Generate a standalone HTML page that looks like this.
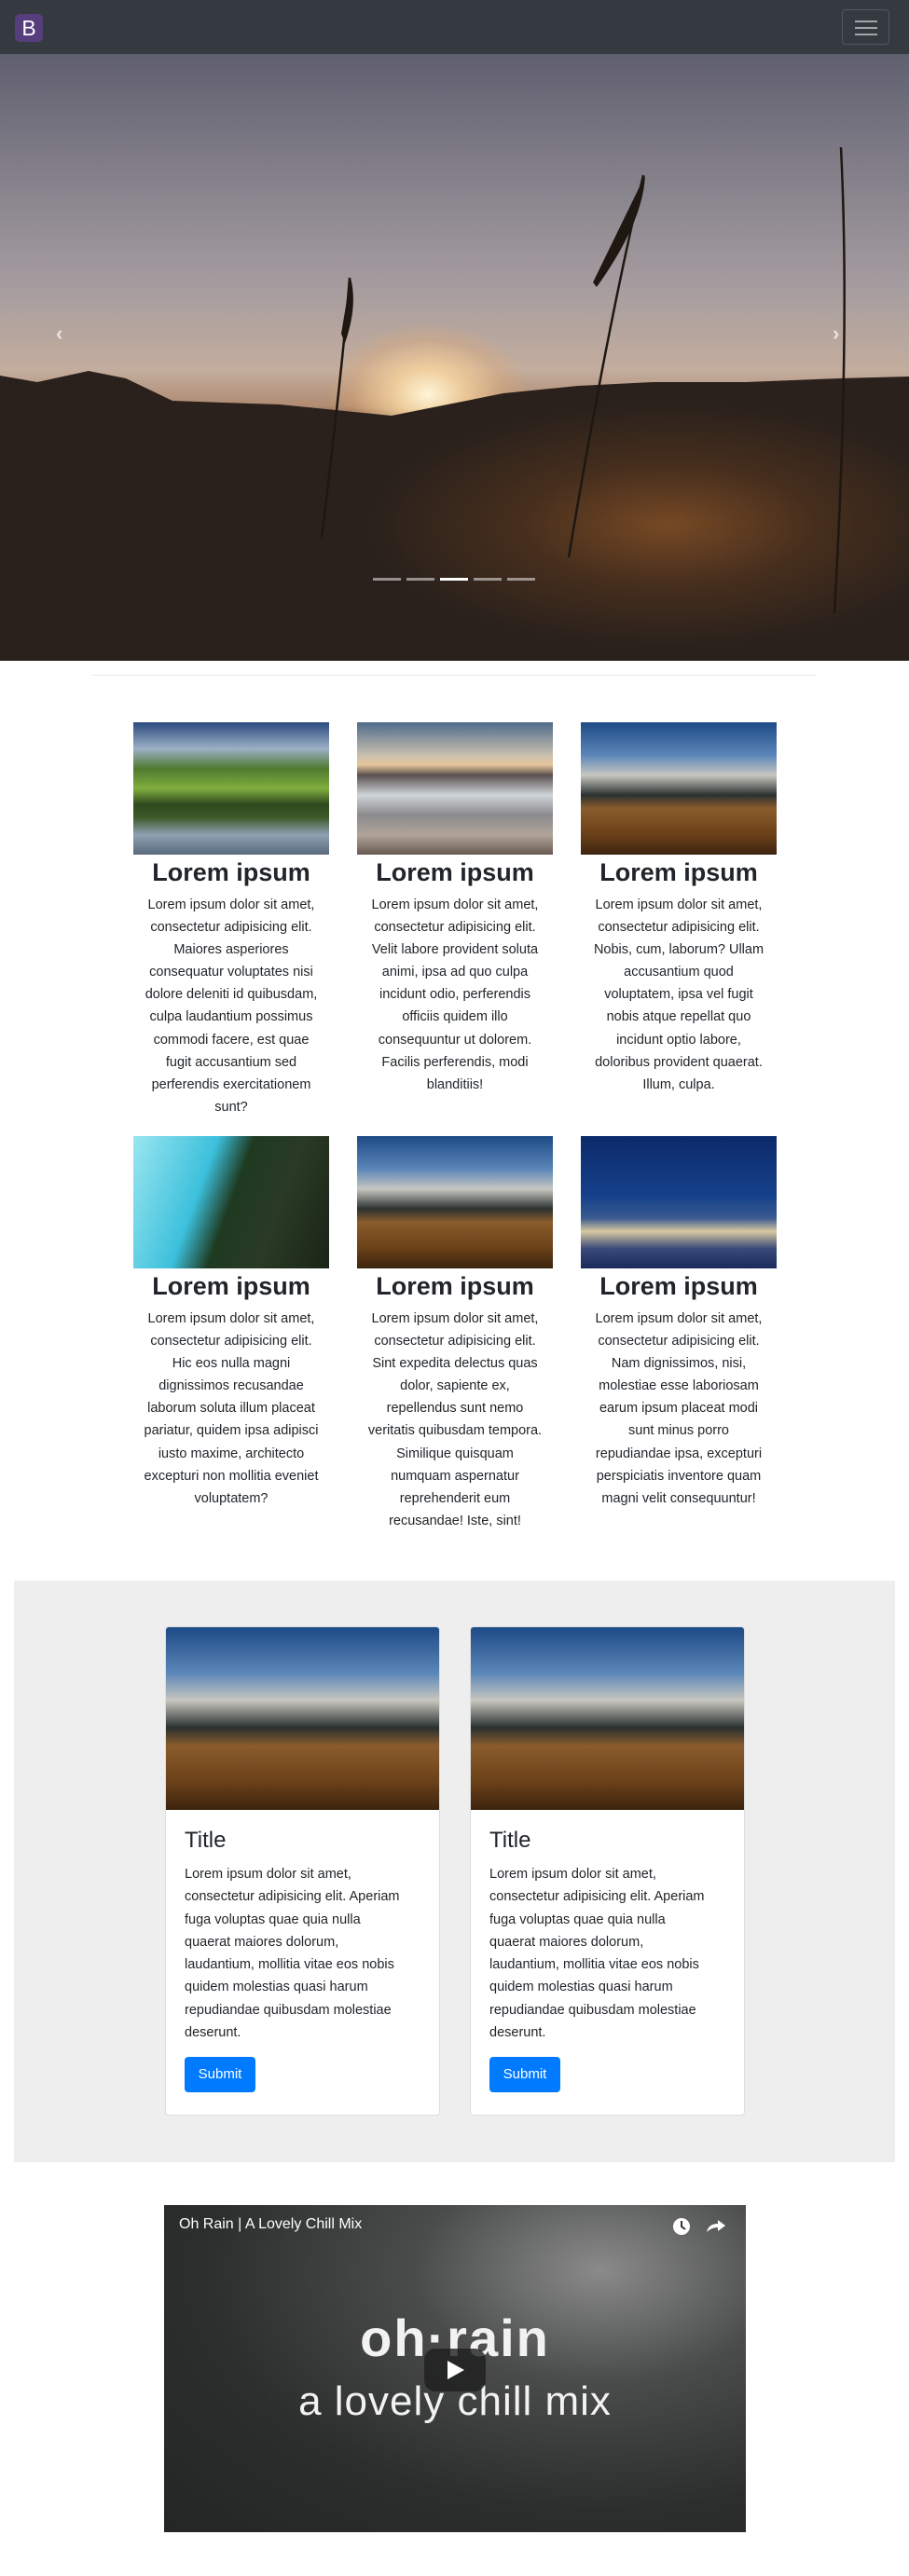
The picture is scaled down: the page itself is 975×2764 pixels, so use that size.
<!DOCTYPE html>
<html><head><meta charset="utf-8">
<style>
*{margin:0;padding:0;box-sizing:border-box}
body{width:975px;height:2764px;position:relative;background:#fff;font-family:"Liberation Sans",sans-serif;color:#212529;overflow:hidden}
.abs{position:absolute}
.nav{left:0;top:0;width:975px;height:58px;background:#343a40}
.logo{left:16px;top:15px;width:30px;height:30px;background:#563d7c;border-radius:5px;color:#fff;font-size:23px;line-height:30px;text-align:center}
.tog{left:903px;top:10px;width:51px;height:38px;border:1px solid rgba(255,255,255,.15);border-radius:4px}
.tog i{position:absolute;left:13px;width:24px;height:2px;background:rgba(255,255,255,.55)}
.hero{left:0;top:58px;width:975px;height:651px;overflow:hidden;
background:linear-gradient(180deg,#605f6e 0%,#807d88 18%,#a59c9f 38%,#c3ad9e 52%,#b08c72 58%,#3a2c26 62%,#2a201c 72%,#201b1a 100%)}
.sun{left:354px;top:290px;width:210px;height:150px;border-radius:50%;background:radial-gradient(ellipse,rgba(255,245,215,1) 0%,rgba(250,215,160,.8) 25%,rgba(230,170,110,.3) 55%,rgba(230,170,110,0) 75%)}
.glow{left:330px;top:360px;width:645px;height:291px;background:radial-gradient(ellipse 50% 45% at 60% 50%,rgba(150,90,40,.7) 0%,rgba(110,65,30,.4) 50%,rgba(32,27,26,0) 100%)}
.ind{top:620px;width:30px;height:3px;background:rgba(255,255,255,.5)}
.hr{left:99px;top:724px;width:777px;height:1px;background:#e8e8e8}
.col{width:210px;text-align:center}
.col .img{width:210px;height:142px}
.col h3{font-size:27px;font-weight:bold;line-height:32px;margin-top:3px;white-space:nowrap;color:#212529}
.col p{font-size:14.5px;line-height:24.1px;margin-top:7px;white-space:nowrap;color:#212529}
.gray{left:15px;top:1696px;width:945px;height:624px;background:#eeeeee}
.card{width:295px;height:525px;background:#fff;border:1px solid #ddd;border-radius:4px;overflow:hidden}
.card .img{height:196px}
.card h4{font-size:24px;font-weight:normal;margin:19px 0 0 20px;line-height:28px}
.card p{font-size:14.5px;line-height:24.3px;margin:10px 0 0 20px;white-space:nowrap}
.btn{margin:14px 0 0 20px;width:76px;height:38px;background:#007bff;color:#fff;border-radius:4px;font-size:15px;line-height:38px;text-align:center}
.field2{background:linear-gradient(180deg,#1e4a86 0%,#5b86b8 25%,#c7c7c0 40%,#2b3130 55%,#8a5c2c 65%,#6a4018 85%,#3c240e 100%)}
.video{left:176px;top:2366px;width:624px;height:351px;background:radial-gradient(ellipse at 75% 20%,#8a8a8a 0%,#4a4c4c 30%,#2c2e2e 65%,#242626 100%);overflow:hidden}
</style></head><body>
<div class="abs nav"></div>
<div class="abs logo">B</div>
<div class="abs tog"><i style="top:11px"></i><i style="top:18px"></i><i style="top:25px"></i></div>

<div class="abs hero">
 <div class="abs sun"></div>
 <svg class="abs" style="left:0;top:0" width="975" height="651">
  <path d="M0 345 L40 352 L95 340 L135 348 L185 372 L240 374 L300 376 L360 382 L420 388 L470 378 L540 364 L620 356 L700 352 L800 352 L900 348 L975 346 L975 651 L0 651Z" fill="#2a211c"/>
 </svg>
 <div class="abs glow"></div>
 <svg class="abs" style="left:0;top:0" width="975" height="651">
  <g stroke="#1e1712" stroke-width="2.5" fill="none"><path d="M375 240 Q368 330 345 520"/><path d="M690 130 Q650 300 610 540"/><path d="M902 100 Q912 300 895 600"/></g>
  <path d="M376 240 Q384 270 370 310 L366 300Z" fill="#1e1712"/>
  <path d="M692 130 Q690 180 640 250 L636 245Z" fill="#1e1712"/>
 </svg>
 <div class="abs" style="left:60px;top:287px;color:rgba(255,255,255,.7);font-size:22px;font-weight:bold">‹</div>
 <div class="abs" style="left:893px;top:287px;color:rgba(255,255,255,.7);font-size:22px;font-weight:bold">›</div>
</div>
<div class="abs ind" style="left:400px"></div>
<div class="abs ind" style="left:436px"></div>
<div class="abs ind" style="left:472px;background:#fff"></div>
<div class="abs ind" style="left:508px"></div>
<div class="abs ind" style="left:544px"></div>

<div class="abs hr"></div>

<div class="abs col" style="left:143px;top:775px">
 <div class="img" style="background:linear-gradient(180deg,#2a4a7e 0%,#9cb0c6 20%,#4f7a2e 35%,#7fae3e 50%,#2e4a1e 62%,#3e5a2a 72%,#8ea0b2 85%,#5a6a7e 100%)"></div>
 <h3>Lorem ipsum</h3>
 <p>Lorem ipsum dolor sit amet,<br>consectetur adipisicing elit.<br>Maiores asperiores<br>consequatur voluptates nisi<br>dolore deleniti id quibusdam,<br>culpa laudantium possimus<br>commodi facere, est quae<br>fugit accusantium sed<br>perferendis exercitationem<br>sunt?</p>
</div>
<div class="abs col" style="left:383px;top:775px">
 <div class="img" style="background:linear-gradient(180deg,#4f6b8a 0%,#c9c0b0 25%,#e6c69a 32%,#5a5050 40%,#cfd4d8 55%,#8a8a8c 70%,#b0a49a 85%,#6a5a52 100%)"></div>
 <h3>Lorem ipsum</h3>
 <p>Lorem ipsum dolor sit amet,<br>consectetur adipisicing elit.<br>Velit labore provident soluta<br>animi, ipsa ad quo culpa<br>incidunt odio, perferendis<br>officiis quidem illo<br>consequuntur ut dolorem.<br>Facilis perferendis, modi<br>blanditiis!</p>
</div>
<div class="abs col" style="left:623px;top:775px">
 <div class="img field2"></div>
 <h3>Lorem ipsum</h3>
 <p>Lorem ipsum dolor sit amet,<br>consectetur adipisicing elit.<br>Nobis, cum, laborum? Ullam<br>accusantium quod<br>voluptatem, ipsa vel fugit<br>nobis atque repellat quo<br>incidunt optio labore,<br>doloribus provident quaerat.<br>Illum, culpa.</p>
</div>

<div class="abs col" style="left:143px;top:1219px">
 <div class="img" style="background:linear-gradient(110deg,#9ae6f0 0%,#3cc0dc 35%,#1e3a20 50%,#2a3a24 70%,#1a2418 100%)"></div>
 <h3>Lorem ipsum</h3>
 <p>Lorem ipsum dolor sit amet,<br>consectetur adipisicing elit.<br>Hic eos nulla magni<br>dignissimos recusandae<br>laborum soluta illum placeat<br>pariatur, quidem ipsa adipisci<br>iusto maxime, architecto<br>excepturi non mollitia eveniet<br>voluptatem?</p>
</div>
<div class="abs col" style="left:383px;top:1219px">
 <div class="img field2"></div>
 <h3>Lorem ipsum</h3>
 <p>Lorem ipsum dolor sit amet,<br>consectetur adipisicing elit.<br>Sint expedita delectus quas<br>dolor, sapiente ex,<br>repellendus sunt nemo<br>veritatis quibusdam tempora.<br>Similique quisquam<br>numquam aspernatur<br>reprehenderit eum<br>recusandae! Iste, sint!</p>
</div>
<div class="abs col" style="left:623px;top:1219px">
 <div class="img" style="background:linear-gradient(180deg,#0c2a6a 0%,#15408a 45%,#3a5a90 62%,#d8c8a0 72%,#3a4a7a 85%,#1a2a5a 100%)"></div>
 <h3>Lorem ipsum</h3>
 <p>Lorem ipsum dolor sit amet,<br>consectetur adipisicing elit.<br>Nam dignissimos, nisi,<br>molestiae esse laboriosam<br>earum ipsum placeat modi<br>sunt minus porro<br>repudiandae ipsa, excepturi<br>perspiciatis inventore quam<br>magni velit consequuntur!</p>
</div>

<div class="abs gray"></div>
<div class="abs card" style="left:177px;top:1745px">
 <div class="img field2"></div>
 <h4>Title</h4>
 <p>Lorem ipsum dolor sit amet,<br>consectetur adipisicing elit. Aperiam<br>fuga voluptas quae quia nulla<br>quaerat maiores dolorum,<br>laudantium, mollitia vitae eos nobis<br>quidem molestias quasi harum<br>repudiandae quibusdam molestiae<br>deserunt.</p>
 <div class="btn">Submit</div>
</div>
<div class="abs card" style="left:504px;top:1745px">
 <div class="img field2"></div>
 <h4>Title</h4>
 <p>Lorem ipsum dolor sit amet,<br>consectetur adipisicing elit. Aperiam<br>fuga voluptas quae quia nulla<br>quaerat maiores dolorum,<br>laudantium, mollitia vitae eos nobis<br>quidem molestias quasi harum<br>repudiandae quibusdam molestiae<br>deserunt.</p>
 <div class="btn">Submit</div>
</div>

<div class="abs video">
 <div class="abs" style="left:16px;top:12px;color:#fff;font-size:16px">Oh Rain | A Lovely Chill Mix</div>
 <svg class="abs" style="left:544px;top:12px" width="64" height="22">
  <circle cx="11" cy="11" r="9" fill="#fff"/><path d="M11 5 V11 L15 14" stroke="#333" stroke-width="2" fill="none"/>
  <path d="M38 17 Q40 8 50 8 V4 L58 10 L50 16 V12 Q43 12 38 17Z" fill="#fff"/>
 </svg>
 <div class="abs" style="left:0;top:110px;width:624px;text-align:center;color:#f2f2f2;font-size:56px;font-weight:bold;letter-spacing:2px">oh·rain</div>
 <div class="abs" style="left:0;top:186px;width:624px;text-align:center;color:#f2f2f2;font-size:44px;letter-spacing:1px">a lovely chill mix</div>
 <div class="abs" style="left:279px;top:154px;width:66px;height:46px;background:rgba(30,30,30,.8);border-radius:12px"></div>
 <svg class="abs" style="left:302px;top:166px" width="22" height="22"><path d="M2 1 L20 11 L2 21Z" fill="#fff"/></svg>
</div>
</body></html>
